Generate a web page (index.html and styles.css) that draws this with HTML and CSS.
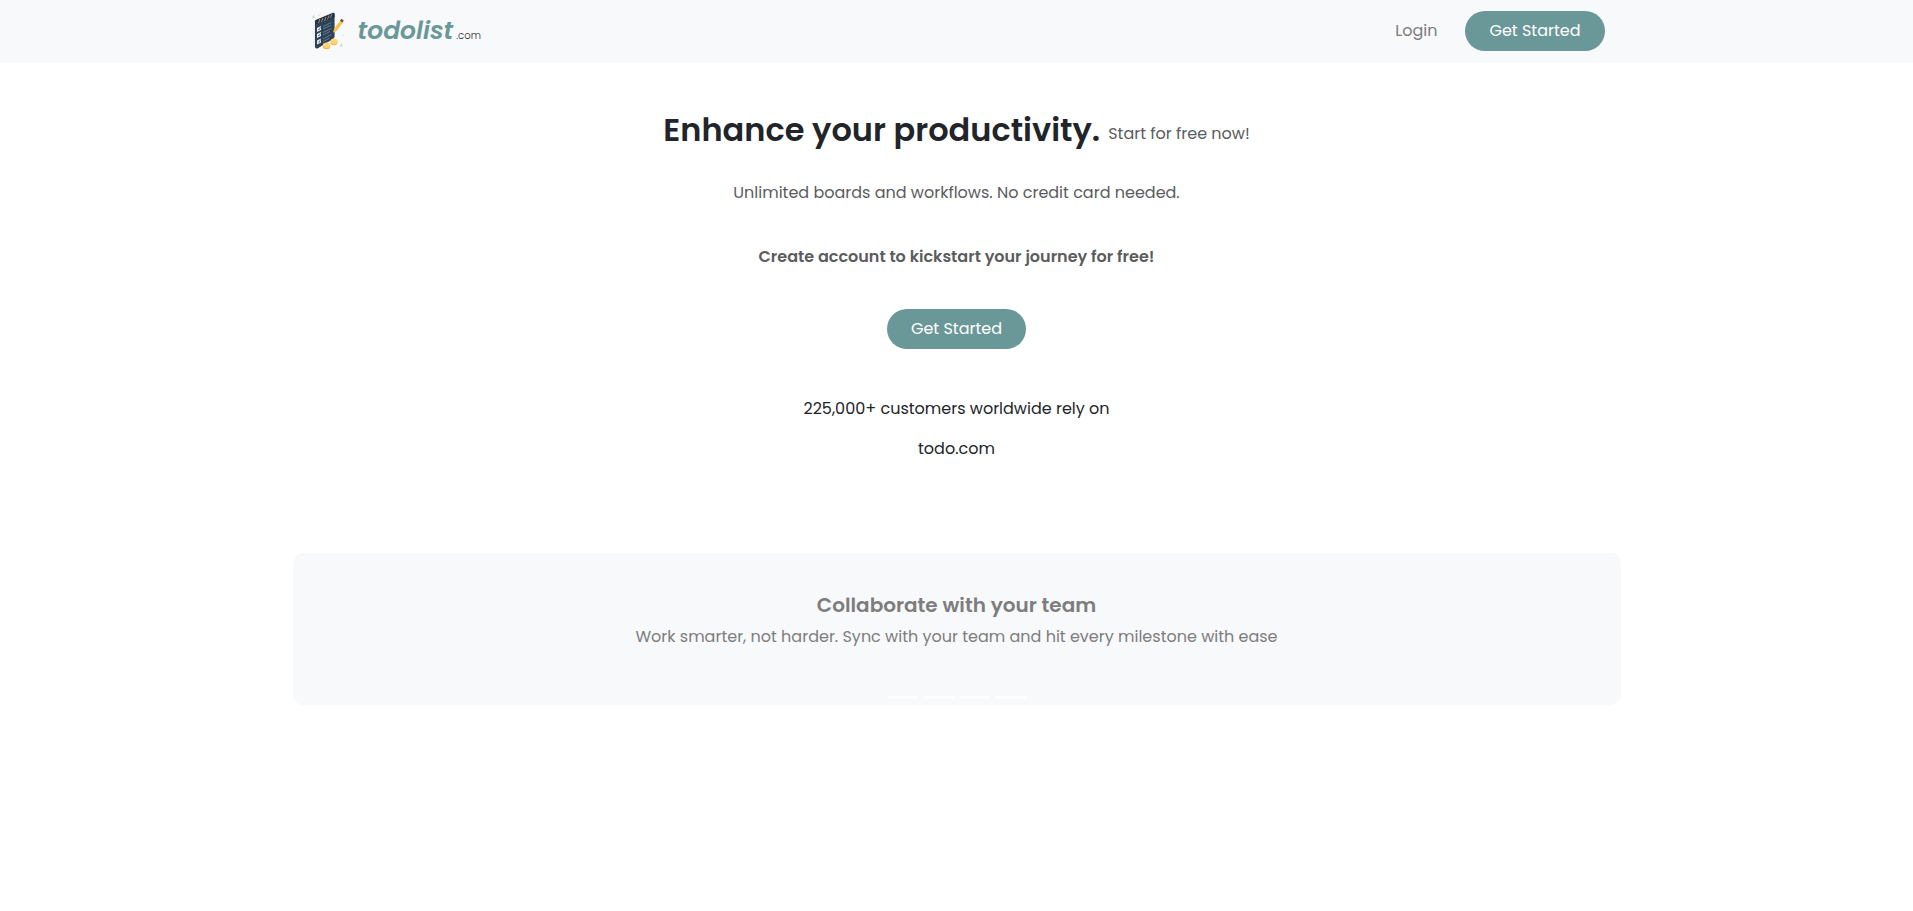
FILE: index.html
```html
<!DOCTYPE html>
<html lang="en">
<head>
<meta charset="utf-8">
<meta name="viewport" content="width=device-width, initial-scale=1">
<title>todolist.com</title>
<link rel="stylesheet" href="styles.css">
</head>
<body>
<header class="site-header">
  <nav class="nav">
    <a class="brand" href="#">
      <svg class="brand-icon" viewBox="0 0 60 64" aria-hidden="true">
        <path d="M14.500 20 34 11.500 35 14 35 37 17 48Q14.500 49 14.500 46Z" fill="#e3dfd8"/>
        <path d="M15 21.500Q15 20.500 16 20L33 13Q34.500 12.500 34.500 14V36Q34.500 38 33 39L17.500 48.500Q15 49 15 46.500Z" fill="#2d4257"/>
        <path d="M15 24V21.500Q15 20.500 16 20L33 13Q34.500 12.500 34.500 14V17Z" fill="#20324a"/>
        <path d="M18.500 23l1.500-4M21.500 22l1.500-4M24.500 21l1.500-4M27.500 19.500l1.500-4M30.500 18l1.500-4" stroke="#c6a866" stroke-width=".8"/>
        <path d="M17 28l4-2v4l-4 2zM17 34l4-2v4l-4 2zM17 40.500l4-2v4l-4 2z" fill="#e9f1f8"/>
        <path d="M18 29l1 1 1.500-3M18 35l1 1 1.500-3M18 41.500l1 1 1.500-3" fill="none" stroke="#3c5269" stroke-width=".7"/>
        <path d="M23 26.500l8.500-4M23 29l8-3.700M23 32.500l8.500-4M23 35l7-3.500M23 39l8.500-4.500M23 41.500l6-3" stroke="#6b8c97" stroke-width=".8"/>
        <path d="M33 32.500l1-3.500L41 19.500l2.700 2L36.500 31Z" fill="#f9c247"/>
        <path d="M40 20.500l1.500-1.800 2.200 1.700-1.300 2z" fill="#5d4c42"/>
        <ellipse cx="34" cy="42" rx="3.500" ry="3.300" fill="#f2b63f"/>
        <ellipse cx="34" cy="41.200" rx="3.200" ry="2.700" fill="#ffd575"/>
        <ellipse cx="26.500" cy="46" rx="3.700" ry="3.300" fill="#f2b63f"/>
        <ellipse cx="26.500" cy="45.200" rx="3.400" ry="2.700" fill="#ffd575"/>
        <path d="M12 18.500l1.500-4 1.500 3zM40 47l1.200-4 1.500 3z" fill="#c9d1d8"/>
        <path d="M18 16l2-1.300M42 35.500l2-.7" stroke="#cfd4d8" stroke-width=".8"/>
      </svg>
      <span class="brand-name">todolist</span><span class="brand-tld">.com</span>
    </a>
    <div class="nav-actions">
      <a class="login" href="#">Login</a>
      <button class="pill" type="button">Get Started</button>
    </div>
  </nav>
</header>
<main>
  <section class="hero">
    <h1 class="hero-title">Enhance your productivity. <small class="hero-note">Start for free now!</small></h1>
    <p class="hero-text">Unlimited boards and workflows. No credit card needed.</p>
    <p class="hero-text strong">Create account to kickstart your journey for free!</p>
    <button class="pill" type="button">Get Started</button>
    <p class="customers">225,000+ customers worldwide rely on<br>todo.com</p>
  </section>
  <section class="carousel">
    <h2 class="slide-title">Collaborate with your team</h2>
    <p class="slide-text">Work smarter, not harder. Sync with your team and hit every milestone with ease</p>
    <div class="indicators">
      <button class="indicator" type="button" aria-label="Slide 1"></button>
      <button class="indicator" type="button" aria-label="Slide 2"></button>
      <button class="indicator" type="button" aria-label="Slide 3"></button>
      <button class="indicator active" type="button" aria-label="Slide 4"></button>
    </div>
  </section>
</main>
</body>
</html>
```
FILE: styles.css
```css
* { box-sizing: border-box; }
body {
  margin: 0;
  background: #fff;
  color: #212529;
  font: 16px/24px Poppins, Inter, sans-serif;
}
h1, h2, p { margin: 0; }
a { color: inherit; text-decoration: none; }
button { font: inherit; border: 0; cursor: pointer; }

.site-header { background: #f8f9fb; }
.nav {
  max-width: 1320px;
  margin: 0 auto;
  padding: 11px 12px 12px;
  display: flex;
  align-items: center;
  justify-content: space-between;
}
.brand { display: flex; align-items: baseline; }
.brand-icon { width: 60px; height: 64px; margin: -13px -2px -15px -9px; align-self: center; }
.brand-name { color: #6a9797; font-size: 25px; font-weight: 600; font-style: italic; line-height: 36px; }
.brand-tld { margin-left: 3px; font-size: 10px; font-weight: 300; }
.nav-actions { display: flex; align-items: center; gap: 28px; }
.login { color: #7d7d7d; }
.pill {
  padding: 8px 24px;
  border-radius: 20px;
  background: #6a9797;
  color: #fff;
}

.hero {
  display: flex;
  flex-direction: column;
  align-items: center;
  padding: 47px 12px 84px;
  text-align: center;
}
.hero-title {
  display: flex;
  flex-wrap: wrap;
  align-items: flex-end;
  justify-content: center;
  column-gap: 8px;
  margin-bottom: 31px;
  font-size: 32px;
  font-weight: 600;
  line-height: 40px;
}
.hero-note { font-size: 16px; font-weight: 400; line-height: 32px; color: #5a5c5e; }
.hero-text { color: #5a5c5e; margin-bottom: 40px; }
.strong { font-weight: 600; }
.customers { margin-top: 40px; line-height: 40px; }

.carousel {
  position: relative;
  max-width: 1328px;
  margin: 0 auto;
  padding: 40px 16px 56px;
  border-radius: 10px;
  background: #f8f9fb;
  color: #7d7d7d;
  text-align: center;
}
.slide-title { font-size: 20px; font-weight: 600; line-height: 24px; margin-bottom: 8px; }
.indicators {
  position: absolute;
  inset: auto 0 6px;
  display: flex;
  justify-content: center;
  gap: 6px;
}
.indicator { width: 30px; height: 3px; padding: 0; background: #fff; opacity: .6; }
.active { opacity: 1; }
```
